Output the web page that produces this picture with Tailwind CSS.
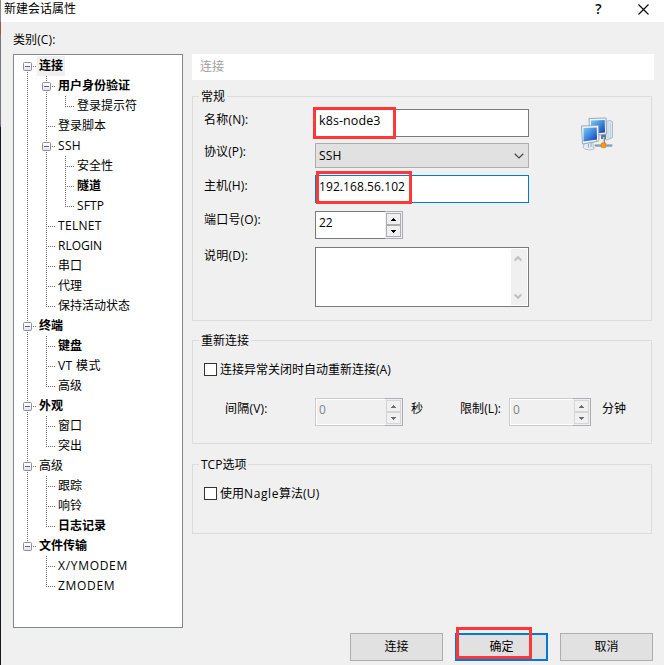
<!DOCTYPE html>
<html lang="zh-CN">
<head>
<meta charset="utf-8">
<title>新建会话属性</title>
<script src="https://cdn.jsdelivr.net/npm/@tailwindcss/browser@4"></script>
</head>
<body class="w-[664px] h-[665px] overflow-hidden bg-[#f0f0f0] text-black text-[12px] leading-[20px] font-['Open_Sans','Noto_Sans_CJK_SC',sans-serif]">
<div class="flex w-[664px] h-[665px]">
  <div class="w-px shrink-0 flex flex-col">
    <div class="h-[22px] bg-[#8a8a8a]"></div><div class="h-[13px] bg-[#a85050]"></div><div class="h-[90px] bg-[#77777b]"></div><div class="h-[2px] bg-[#7a3a90]"></div><div class="h-[538px] bg-[#18181c]"></div>
  </div>
  <div class="flex-1 flex flex-col">
    <header class="h-[22px] shrink-0 bg-white flex items-start pl-[3px]">
      <h1 class="-mt-[1px]">新建会话属性</h1>
      <span class="ml-auto w-[9px] text-center text-[14px] leading-[18px] font-semibold">?</span>
      <svg class="ml-[35px] mr-[15px] mt-[4px]" width="11" height="11" viewBox="0 0 11 11"><path d="M.5.5l10 10M10.5.5l-10 10" stroke="#000" stroke-width="1.1"/></svg>
    </header>

    <main class="flex pl-[12px]">
      <div class="w-[170px] shrink-0">
        <div class="h-[32px] pt-[8px] tracking-[0.1px]">类别(C):</div>
        <div id="tree" class="h-[574px] border border-[#828790] bg-white pt-px pl-[4px]"></div>
      </div>

      <div class="ml-[9px] w-[462px] pt-[32px]">
        <div class="h-[26px] bg-white pl-[8px] leading-[26px] text-[#a0a0a0]">连接</div>

        <section class="mt-[16px] w-[460px] h-[225px] border border-[#dcdcdc] flex flex-col">
          <h2 class="-mt-[10px] ml-[6px] h-[20px] shrink-0 w-max bg-[#f0f0f0] px-[2px]">常规</h2>
          <div class="flex mt-[2px]">
            <div class="w-[336px] pl-[11px]">
              <div class="flex h-[28px]">
                <label class="w-[111px] mt-px tracking-[0.2px]">名称(N):</label>
                <div class="relative w-[214px] border border-[#7a7a7a] bg-white pl-[3px] leading-[22px] text-[12.5px] tracking-[0.1px]">k8s-node3
                  <div class="absolute -left-[3px] -top-[3px] w-[83px] h-[32px] border-[3px] border-[#ff3737]"></div>
                </div>
              </div>
              <div class="flex h-[25px] mt-[6px]">
                <label class="w-[111px] tracking-[0.1px] -mt-[1px]">协议(P):</label>
                <div class="w-[214px] border border-[#adadad] bg-[#e1e1e1] pl-[3px] pr-[4px] flex items-center justify-between tracking-[0.2px]">SSH
                  <svg width="10" height="6" viewBox="0 0 10 6" fill="none"><path d="M.7.8L5 5 9.3.8" stroke="#444" stroke-width="1.2"/></svg>
                </div>
              </div>
              <div class="flex h-[28px] mt-[7px]">
                <label class="w-[111px] tracking-[0.1px] mt-[1px]">主机(H):</label>
                <div class="relative w-[214px] border border-[#0078d7] bg-white pl-[3px] leading-[22px] tracking-[0.08px]">192.168.56.102
                  <div class="absolute left-0 -top-[5px] w-[96px] h-[33px] border-[3px] border-[#ff3737]"></div>
                </div>
              </div>
              <div class="flex h-[28px] mt-[8px]">
                <label class="w-[111px] tracking-[0.2px] -mt-[1px]">端口号(O):</label>
                <div class="flex w-[88px]">
                  <div class="w-[70px] border border-r-0 border-[#7a7a7a] bg-white pl-[3px] leading-[22px]">22</div>
                  <div class="w-[18px] border border-l-0 border-[#abadb3] bg-[#f0f0f0] p-px flex flex-col">
                    <div class="flex-1 border border-[#adadad] flex items-center justify-center"><svg width="5" height="3"><path d="M2 0h1v1h1v1h1v1H0V2h1V1h1z"/></svg></div>
                    <div class="flex-1 border border-[#adadad] flex items-center justify-center"><svg width="5" height="3"><path d="M0 0h5v1H4v1H3v1H2V2H1V1H0z"/></svg></div>
                  </div>
                </div>
              </div>
              <div class="flex h-[60px] mt-[8px]">
                <label class="w-[111px] tracking-[0.2px] -mt-[1px]">说明(D):</label>
                <div class="w-[214px] border border-[#7a7a7a] bg-white flex justify-end p-px">
                  <div class="w-[16px] bg-[#f0f0f0] flex flex-col items-center justify-between pt-[6px] pb-[5px] pr-[2px]">
                    <svg width="8" height="7" viewBox="0 0 8 7" fill="none"><path d="M.7 5.500l3.300-3.300 3.300 3.300" stroke="#bfbfbf" stroke-width="2"/></svg>
                    <svg width="8" height="7" viewBox="0 0 8 7" fill="none"><path d="M.7 1.500L4 4.800l3.300-3.300" stroke="#bfbfbf" stroke-width="2"/></svg>
                  </div>
                </div>
              </div>
            </div>
            <svg class="ml-[51px] mt-[8px]" width="34" height="34" viewBox="0 0 34 34">
              <defs>
                <linearGradient id="scr" x1="0" y1="0" x2="1" y2="1"><stop offset="0" stop-color="#77cdf5"/><stop offset=".5" stop-color="#3f87dd"/><stop offset="1" stop-color="#1636ad"/></linearGradient>
                <linearGradient id="cyl" x1="0" y1="0" x2="0" y2="1"><stop offset="0" stop-color="#eef3f6"/><stop offset=".5" stop-color="#8198aa"/><stop offset="1" stop-color="#b2c2ce"/></linearGradient>
              </defs>
              <path d="M26 4.500l4-1 2.500 1.200v15.800l-5.500 2.500-2-1z" fill="#dbe6ec" stroke="#9ab0bf" stroke-width=".8"/>
              <path d="M28 6v15.500M30.500 5.500v15.500" stroke="#b4c9d5" stroke-width=".7"/>
              <path d="M21 16h5v6h-5z" fill="#5d7898"/>
              <path d="M9 1.500l17-.5.5 16L10 19z" fill="#f1f4f5" stroke="#93a9bb" stroke-width="1"/>
              <path d="M11 3.500l13.700-.4.3 12.300L11 17z" fill="url(#scr)"/>
              <path d="M8 25.500l5-.5v5q2 .5 1 2-4 2-9.500 0-2-1.500-1-4.500z" fill="#e5edf2" stroke="#a2b5c2" stroke-width=".8"/>
              <path d="M8.500 26.500v4M11 26v4" stroke="#8ea5b6" stroke-width="1"/>
              <rect x="14.500" y="26.500" width="18" height="3.500" rx="1.500" fill="url(#cyl)"/>
              <path d="M24 20v8" stroke="#7790a4" stroke-width="2.200"/><path d="M23.600 20v7" stroke="#d6e0e7" stroke-width=".8"/>
              <path d="M1.500 9l17-.5.5 15.500L2.500 27z" fill="#f3f5f5" stroke="#93a9bb" stroke-width="1"/>
              <path d="M3.500 11l13.200-.5.3 12L3.500 24.500z" fill="url(#scr)"/>
              <path d="M18 24l3-1.500 1.500 1.500-2.500 1.500z" fill="#edf2ed"/><circle cx="16.500" cy="24" r=".7" fill="#75d34b"/>
              <rect x="21.300" y="26" width="4.600" height="4.600" rx=".5" fill="#ff9b00" stroke="#d77400" stroke-width=".6"/>
            </svg>
          </div>
        </section>

        <section class="mt-[19px] w-[460px] h-[104px] border border-[#dcdcdc] flex flex-col">
          <h2 class="-mt-[10px] ml-[6px] h-[20px] shrink-0 w-max bg-[#f0f0f0] px-[2px]">重新连接</h2>
          <div class="flex items-start gap-[3px] mt-[9px] pl-[11px] h-[20px]"><span class="mt-[3px] w-[13px] h-[13px] border border-[#333] bg-white"></span><span>连接异常关闭时自动重新连接(A)</span></div>
          <div class="flex mt-[18px] h-[28px] pl-[32px]">
            <label class="w-[90px] mt-px tracking-[0.2px]">间隔(V):</label>
            <div class="flex w-[88px] text-[#838383]">
              <div class="w-[70px] border border-r-0 border-[#ccc] bg-[#f0f0f0] pl-[3px] leading-[22px] shadow-[inset_1px_1px_0_#fff,inset_0_-1px_0_#fff]">0</div>
              <div class="w-[18px] border border-l-0 border-[#abadb3] bg-[#f0f0f0] p-px flex flex-col">
                <div class="flex-1 border border-[#d5d5d5] flex items-center justify-center"><svg width="5" height="3"><path fill="#6d6d6d" d="M2 0h1v1h1v1h1v1H0V2h1V1h1z"/></svg></div>
                <div class="flex-1 border border-[#d5d5d5] flex items-center justify-center"><svg width="5" height="3"><path fill="#6d6d6d" d="M0 0h5v1H4v1H3v1H2V2H1V1H0z"/></svg></div>
              </div>
            </div>
            <span class="ml-[8px] w-[49px] mt-px">秒</span>
            <label class="w-[49px] mt-px tracking-[0.1px]">限制(L):</label>
            <div class="flex w-[82px] text-[#838383]">
              <div class="w-[64px] border border-r-0 border-[#ccc] bg-[#f0f0f0] pl-[3px] leading-[22px] shadow-[inset_1px_1px_0_#fff,inset_0_-1px_0_#fff]">0</div>
              <div class="w-[18px] border border-l-0 border-[#abadb3] bg-[#f0f0f0] p-px flex flex-col">
                <div class="flex-1 border border-[#d5d5d5] flex items-center justify-center"><svg width="5" height="3"><path fill="#6d6d6d" d="M2 0h1v1h1v1h1v1H0V2h1V1h1z"/></svg></div>
                <div class="flex-1 border border-[#d5d5d5] flex items-center justify-center"><svg width="5" height="3"><path fill="#6d6d6d" d="M0 0h5v1H4v1H3v1H2V2H1V1H0z"/></svg></div>
              </div>
            </div>
            <span class="ml-[11px] mt-px">分钟</span>
          </div>
        </section>

        <section class="mt-[20px] w-[460px] h-[70px] border border-[#dcdcdc] flex flex-col">
          <h2 class="-mt-[10px] ml-[6px] h-[20px] shrink-0 w-max bg-[#f0f0f0] px-[2px]">TCP选项</h2>
          <div class="flex items-start gap-[3px] mt-[9px] pl-[11px] h-[20px]"><span class="mt-[3px] w-[13px] h-[13px] border border-[#333] bg-white"></span><span>使用<span class="tracking-[0.6px]">Nagle</span>算法<span class="tracking-[0.2px]">(U)</span></span></div>
        </section>
      </div>
    </main>

    <footer class="flex gap-[12px] pl-[349px] mt-[5px] text-center leading-[26px]">
      <button class="w-[93px] h-[28px] border border-[#adadad] bg-[#e1e1e1]">连接</button>
      <button class="relative w-[93px] h-[28px] border-2 border-[#0078d7] bg-[#e1e1e1] leading-[24px]">确定
        <span class="absolute -left-[1px] -top-[8px] w-[76px] h-[32px] border-[3px] border-[#ff3737]"></span>
      </button>
      <button class="w-[93px] h-[28px] border border-[#adadad] bg-[#e1e1e1]">取消</button>
    </footer>
  </div>
</div>

<svg width="0" height="0" class="absolute">
  <defs><linearGradient id="knob" x1="0" y1="0" x2="0" y2="1"><stop offset="0" stop-color="#fff"/><stop offset=".5" stop-color="#f6f6f6"/><stop offset="1" stop-color="#dcdcdc"/></linearGradient></defs>
</svg>
<script>
// Each row: [cell codes, label, bold, tracking class]
// Cells: | line, T tee, L elbow, _ blank, F/M/E first/middle/last expander
const rows = [
  ['F', '连接', 1], ['|M', '用户身份验证', 1], ['||L', '登录提示符', 0], ['|T', '登录脚本', 0], ['|M', 'SSH', 0, 'tracking-[0.3px]'],
  ['||T', '安全性', 0], ['||T', '隧道', 1], ['||L', 'SFTP', 0, 'tracking-[0.1px]'], ['|T', 'TELNET', 0, 'tracking-[0.3px]'], ['|T', 'RLOGIN', 0],
  ['|T', '串口', 0], ['|T', '代理', 0], ['|L', '保持活动状态', 0], ['M', '终端', 1], ['|T', '键盘', 1],
  ['|T', 'VT 模式', 0, 'tracking-[0.4px]'], ['|L', '高级', 0], ['M', '外观', 1], ['|T', '窗口', 0], ['|L', '突出', 0],
  ['M', '高级', 0], ['|T', '跟踪', 0], ['|T', '响铃', 0], ['|L', '日志记录', 1], ['E', '文件传输', 1],
  ['_T', 'X/YMODEM', 0, 'tracking-[0.7px]'], ['_L', 'ZMODEM', 0, 'tracking-[0.7px]']
];
const dots = d => `<path d="${d}" stroke="#707070" stroke-dasharray="1 1" fill="none"/>`;
const box = '<rect x="5.500" y="6.500" width="8" height="8" rx="1" fill="url(#knob)" stroke="#919191"/><path d="M7 10.500h5" stroke="#4b63a7"/>';
const stub = dots('M15 10.5h4');
const cell = {
  '_': '',
  '|': dots('M9.5 0v20'),
  'T': dots('M9.5 0v20') + dots('M9 10.5h9'),
  'L': dots('M9.5 0v11') + dots('M9 10.5h9'),
  'F': dots('M9.5 16v4') + box + stub,
  'M': dots('M9.5 0v20') + box + stub,
  'E': dots('M9.5 0v6') + box + stub
};
document.getElementById('tree').innerHTML = rows.map(([codes, label, bold, track = ''], i) =>
  '<div class="flex h-[20px]">' +
  [...codes].map(c => `<svg class="shrink-0" width="19" height="20" viewBox="0 0 19 20">${cell[c]}</svg>`).join('') +
  `<span class="px-[2px] whitespace-nowrap ${track} ${bold ? 'font-bold' : ''} ${i === 0 ? 'bg-[#f0f0f0]' : ''}">${label}</span></div>`
).join('');
</script>
</body>
</html>
